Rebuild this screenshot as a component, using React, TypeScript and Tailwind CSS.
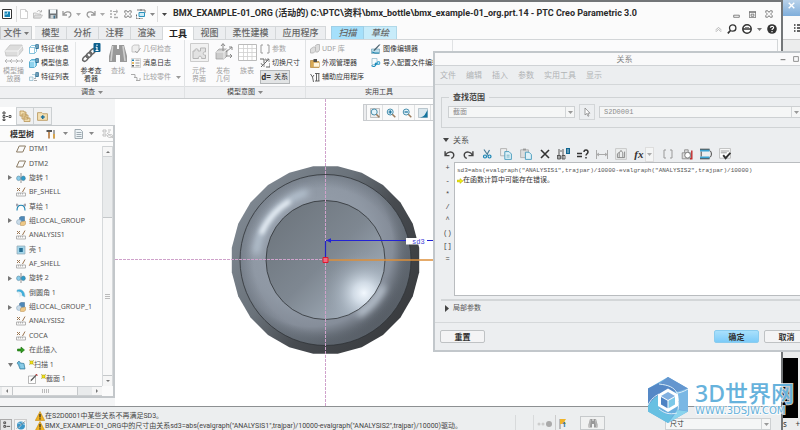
import React from "react";

type P = { children?: React.ReactNode; className?: string; box?: string };

function Ic({ children, className = "size-[10px]", box = "0 0 10 10" }: P) {
  return (
    <svg viewBox={box} className={"block shrink-0 " + className} fill="none" aria-hidden="true">
      {children}
    </svg>
  );
}

function Down({ className = "text-[#888]" }: P) {
  return (
    <Ic className={"h-[3px] w-[5px] " + className} box="0 0 5 3">
      <path d="M0 0h5L2.5 3z" fill="currentColor" />
    </Ic>
  );
}

const icons = {
  newFile: (
    <Ic>
      <path d="M1.5.5h5l2 2v7h-7z" fill="#fff" stroke="#c4c4c4" strokeWidth=".8" />
      <path d="M6.5.5v2h2" stroke="#c4c4c4" strokeWidth=".8" />
    </Ic>
  ),
  open: (
    <Ic>
      <path d="M.5 9V4h3l1 1h3v4z" fill="#eee" stroke="#b5b5b5" strokeWidth=".8" />
      <path d="M2 6h7.500L8 9H.5z" fill="#ddd" stroke="#b5b5b5" strokeWidth=".6" />
      <path d="M4 3c1-2 3-2 4 0M8.500 1v2h-2" stroke="#aaa" strokeWidth=".8" />
    </Ic>
  ),
  save: (
    <Ic>
      <path d="M.5.5h9v9h-9z" fill="#6d7276" />
      <path d="M2 .5h6v4H2z" fill="#f2f6f8" />
      <path d="M2.500 6h5v3.500h-5z" fill="#cdd2d5" />
      <path d="M5.500 6.500h1.500v3H5.500z" fill="#3b6f8c" />
    </Ic>
  ),
  undo: (
    <Ic>
      <path d="M1 2v4h4M1.500 5.500C3 2.500 7 2 8.500 4c1 2 0 4-2 4.500" stroke="currentColor" strokeWidth="1.3" />
    </Ic>
  ),
  redo: (
    <Ic>
      <path d="M9 2v4H5M8.500 5.500C7 2.500 3 2 1.500 4c-1 2 0 4 2 4.500" stroke="currentColor" strokeWidth="1.3" />
    </Ic>
  ),
  regen: (
    <Ic>
      <path d="M1 2h2M1 5h2M1 8h2M5 8.500h4M5 5.500h2" stroke="#aaa" strokeWidth="1.300" />
      <path d="M4 2.500h4M7 .8l2 1.700L7 4.200" stroke="#aaa" />
    </Ic>
  ),
  close: (
    <Ic className="size-[8px]">
      <path d="M1 1h2.500L5 3l1.500-2H9v2L7 5l2 2v2H6.500L5 7 3.500 9H1V7l2-2-2-2z" stroke="#555" strokeWidth=".9" />
    </Ic>
  ),
  windows: (
    <Ic>
      <path d="M1 1h5M4 1h5v3" stroke="#666" strokeWidth=".9" />
      <path d="M3 3.500h5.500v4H3z" fill="#cdeaf6" stroke="#2b93bd" />
      <path d="M.5 5.500v4h6" stroke="#555" strokeWidth=".9" strokeDasharray="2 1" />
    </Ic>
  ),
  cubeInfo: (
    <Ic>
      <path d="M.5 3.500L2.500 1.500h5v6l-2 2h-5z" fill="#fff" stroke="#68b4d4" strokeWidth=".8" />
      <path d="M.5 3.500h5v6M5.500 3.500l2-2" stroke="#68b4d4" strokeWidth=".7" />
      <path d="M6.500.3h3.200v4.500H6.500z" fill="#0c5a86" />
      <path d="M8 1v3" stroke="#fff" strokeWidth=".8" />
    </Ic>
  ),
  modelInfo: (
    <Ic>
      <path d="M.5 3.500L2.500 1.500h5v6l-2 2h-5z" fill="#8fd3ee" stroke="#3f9ec6" strokeWidth=".8" />
      <path d="M.5 3.500h5v6" stroke="#dff4fc" strokeWidth=".7" />
      <path d="M6.500.3h3.200v4.500H6.500z" fill="#0c5a86" />
      <path d="M8 1v3" stroke="#fff" strokeWidth=".8" />
    </Ic>
  ),
  featList: (
    <Ic>
      <path d="M.5 5h3.500v3.500H.5zM3 2.500h3.500V6" fill="#eef6fa" stroke="#8bb6c9" strokeWidth=".7" />
      <path d="M5 8.500h3M5 6.500h2" stroke="#999" strokeWidth=".8" />
      <path d="M6.500.3h3.200v4.500H6.500z" fill="#0c5a86" />
      <path d="M8 1v3" stroke="#fff" strokeWidth=".8" />
    </Ic>
  ),
  geomCheck: (
    <Ic>
      <path d="M1 2.500L3 1h5v5.500L6 8H1z" fill="#eee" stroke="#bbb" strokeWidth=".8" />
      <path d="M4 7l2 2 3.500-5" stroke="#aaa" />
    </Ic>
  ),
  msgLog: (
    <Ic>
      <path d="M.5.5h9v9h-9z" fill="#fafafa" stroke="#bbb" strokeWidth=".6" />
      <path d="M1 1.500h2v1.500H1z" fill="#1d80ae" />
      <path d="M1 4.300h2v1.500H1z" fill="#e0a32c" />
      <path d="M1 7h2v1.500H1z" fill="#555" />
      <path d="M4.500 2.200h4M4.500 5h4M4.500 7.800h4" stroke="#888" strokeWidth=".9" />
    </Ic>
  ),
  compare: (
    <Ic>
      <path d="M0 2.500h4v3M3 5.500h3v3M5 8.500h4V6" stroke="#aaa" />
    </Ic>
  ),
  brackets: (
    <Ic>
      <path d="M3 1H1v8h2M7 1h2v8H7" stroke="#999" />
    </Ic>
  ),
  switchDim: (
    <Ic>
      <path d="M0 1h4v4M6 9h4V5M1 9L9 1" stroke="#555" strokeWidth=".9" />
      <path d="M5 1h1v2h1V1h2v3M1 5l1 2 2-1v3" stroke="#777" strokeWidth=".8" />
    </Ic>
  ),
  udf: (
    <Ic>
      <path d="M.5 5l3-2h2v4l-2 2h-3zM5 2l2-1.500h2.500V6L8 8H5.500" fill="#ddd" stroke="#b3b3b3" strokeWidth=".8" />
    </Ic>
  ),
  palette: (
    <Ic>
      <path d="M.5 2.500h4l1 1h3.500v6H.5z" fill="#d9a954" stroke="#a9782c" strokeWidth=".6" />
      <path d="M3.500 1h3.500v3H3.500z" fill="#4d4d4d" />
      <path d="M3.500 4.500h6v4.500h-6z" fill="#fff4dc" stroke="#c79a50" strokeWidth=".5" />
    </Ic>
  ),
  wrench: (
    <Ic>
      <path d="M.5 2l2 3 1.500-2M2.500 5l1 5M5 1.500h4.500M6.500 1.500V9M8.800 1.500V9M5 9h4.500" stroke="#555" strokeWidth=".9" />
    </Ic>
  ),
  imgEdit: (
    <Ic>
      <path d="M.5 5h8v4.500h-8z" fill="#b9dcea" stroke="#6699ac" strokeWidth=".6" />
      <path d="M9.500.5L4 6.500l-1.500.7.5-1.700L8 .5z" fill="#4b6370" />
      <path d="M1 8l3 1h4" stroke="#1982ad" />
    </Ic>
  ),
  importCfg: (
    <Ic>
      <path d="M1 .5h5v6H1z" fill="#f6fbfd" stroke="#7aa9bd" strokeWidth=".6" />
      <path d="M.5 7.500C3 9.500 5 8 5 5.500M3.700 6.700L5 5l1.500 1.500" stroke="#1689b9" strokeWidth="1.100" />
      <circle cx="7.500" cy="5" r="1.900" fill="#45a8d0" />
      <circle cx="7.500" cy="5" r=".7" fill="#fff" />
    </Ic>
  ),
  plane: (
    <Ic>
      <path d="M3.200 2H9.500L6.800 8H.5z" stroke="#8a7a62" />
    </Ic>
  ),
  revolve: (
    <Ic>
      <path d="M5 0v10" stroke="#777" strokeWidth=".8" />
      <ellipse cx="2.600" cy="5.300" rx="2" ry="2.300" fill="#8acbe8" stroke="#5a8ca3" strokeWidth=".6" />
      <ellipse cx="7.300" cy="5.300" rx="2" ry="2.300" fill="#2b9bcb" stroke="#4a7c93" strokeWidth=".6" />
    </Ic>
  ),
  analysis: (
    <Ic>
      <path d="M1 1l3 3M4 1L1 4" stroke="#9a7550" />
      <path d="M9 .5L6.500 5" stroke="#9a7550" />
      <path d="M.5 6h9v3h-9zM2.500 6v1.500M4.500 6v1.500M6.500 6v1.500" stroke="#a2a2a2" strokeWidth=".8" />
    </Ic>
  ),
  sketch: (
    <Ic>
      <path d="M1 8.500C1 1.500 9 1.500 9 8.500" stroke="#1a83b1" strokeWidth="1.100" />
      <path d="M0 3h2.500M7.500 3H10M1 1.500v3M9 1.500v3" stroke="#667" strokeWidth=".7" />
    </Ic>
  ),
  group: (
    <Ic>
      <path d="M3.500 1.500L5 .5h3.500V5l-1.500 1H3.500z" fill="#4d88b8" stroke="#39688f" strokeWidth=".5" />
      <circle cx="3" cy="6" r="2.500" fill="#c9dbe8" stroke="#86a3b8" strokeWidth=".5" />
      <path d="M4.500 9.500V6.500l2-1.200h3v3L8 9.500z" fill="#eec887" stroke="#ba9150" strokeWidth=".5" />
    </Ic>
  ),
  shell: (
    <Ic>
      <path d="M1 1h8v8H1z" fill="#a5d6ea" stroke="#92a7b1" strokeWidth=".7" />
      <path d="M3.200 3h3.600v4H3.200z" fill="#276f93" />
    </Ic>
  ),
  round: (
    <Ic>
      <path d="M1 2c4-2 8 1 8 7L6 7.500C6 5 4.500 3 1 4z" fill="#3daedb" stroke="#86b7ca" strokeWidth=".5" />
      <path d="M1 4c3.500-1 5 1 5 3.500L3 9.500C4 7 3 5 1 4z" fill="#dcebf2" />
    </Ic>
  ),
  insert: (
    <Ic>
      <path d="M1.500 4h3.500V2L8.500 5 5 8V6H1.500z" fill="#2f9b1f" stroke="#176b0c" strokeWidth=".6" />
    </Ic>
  ),
  sweep: (
    <Ic>
      <path d="M1 3l2-2 1.500 2L8 3.500 9 9H4L2.500 5z" fill="#67b9dc" stroke="#3d7c99" strokeWidth=".7" />
      <path d="M4 5h3.500M4.500 7H8" stroke="#c9ecf9" strokeWidth=".7" />
    </Ic>
  ),
  section: (
    <Ic>
      <path d="M.5 2h7v7.500h-7z" fill="#fff" stroke="#999" strokeWidth=".7" />
      <path d="M9.500.5L4 6.500l-1.500 1 .5-2L8.500 0z" fill="#555" />
      <path d="M7.500 0l2 1.500" stroke="#d33" />
    </Ic>
  ),
  spark: (
    <Ic className="mb-[4px] size-[5px]">
      <path d="M2 2h6v6H2z" fill="#f6e51b" stroke="#a09500" />
      <path d="M0 0l2 2M10 0L8 2M0 10l2-2M10 10L8 8" stroke="#a09500" />
    </Ic>
  ),
  warn: (
    <Ic className="size-[10px]">
      <path d="M5 .5L9.700 9.500H.3z" fill="#f0b323" stroke="#c68a10" strokeWidth=".6" />
      <path d="M5 3v3.500M5 7.300v1.200" stroke="#222" strokeWidth="1.200" />
    </Ic>
  ),
  binoc: (
    <>
      <path d="M2 1h2.500v2h1V1H8l1.500 5.500v3H6V6H4v3.500H.5v-3z" fill="#999" />
      <path d="M2.300 1.500L1.500 9M7.500 1.500l1 7.500" stroke="#cfcfcf" strokeWidth=".8" />
    </>
  ),
};

function BigTool({ label, icon, dim = true, wide = "w-[24px]" }: { label: string[]; icon: React.ReactNode; dim?: boolean; wide?: string }) {
  return (
    <button className={"flex h-[43px] flex-col items-center leading-[8px] " + wide + (dim ? " text-[#a2a2a2]" : " text-[#333]")}>
      <span className="mb-[4px] flex h-[21px] items-center">{icon}</span>
      {label.map((l) => (
        <span key={l} className="whitespace-nowrap">{l}</span>
      ))}
    </button>
  );
}

function Tool({ label, icon, dim, menu, on }: { label: string; icon: React.ReactNode; dim?: boolean; menu?: boolean; on?: boolean }) {
  return (
    <button
      className={
        "flex h-[14px] items-center gap-[2px] whitespace-nowrap pr-[2px] " +
        (dim ? "text-[#a2a2a2] " : "text-[#333] ") +
        (on ? "bg-[#e2e4e5] outline outline-[#b3b6b8] -outline-offset-1" : "")
      }
    >
      {icon}
      {label}
      {menu && <span className="pl-[3px]"><Down className="text-[#999]" /></span>}
    </button>
  );
}

const tabs = [
  ["模型", "w-[32px]"], ["分析", "w-[32px]"], ["注释", "w-[32px]"], ["渲染", "w-[32px]"], ["工具", "w-[31px]"],
  ["视图", "w-[32px]"], ["柔性建模", "w-[50px]"], ["应用程序", "w-[50px]"],
];

function TitleBar() {
  return (
    <header className="flex h-[24px] items-center pl-[2px] pr-[8px]">
      <Ic className="size-[10px]">
        <path d="M.5.5h9v9h-9z" fill="#fff" stroke="#333" />
        <path d="M2.500 2.500H8V8H2.500z" fill="#1683b4" />
        <path d="M2.500 5h3V2.500" stroke="#a6d9ee" />
      </Ic>
      <span className="ml-[4px] h-[16px] w-px bg-[#ddd]" />
      <div className="ml-[2px] flex w-[136px] items-center justify-between text-[#999]">
        <button aria-label="新建">{icons.newFile}</button>
        <button aria-label="打开">{icons.open}</button>
        <button aria-label="保存">{icons.save}</button>
        <button aria-label="撤消" className="flex items-center gap-[4px]">{icons.undo}<Down className="text-[#aaa]" /></button>
        <button aria-label="重做" className="flex items-center gap-[4px]">{icons.redo}<Down className="text-[#aaa]" /></button>
        <button aria-label="重新生成">{icons.regen}</button>
        <button aria-label="关闭">{icons.close}</button>
        <button aria-label="窗口" className="flex items-center gap-[4px]">{icons.windows}<Down /></button>
      </div>
      <span className="ml-[2px] h-[16px] w-px bg-[#ddd]" />
      <button aria-label="自定义" className="ml-[4px]"><Down className="text-[#444]" /></button>
      <h1 className="ml-[6px] grow whitespace-nowrap font-['Roboto','Noto_Sans_CJK_SC',sans-serif] text-[9px] font-bold text-[#2b2b2b]">
        BMX_EXAMPLE-01_ORG (活动的) C:\PTC\资料\bmx_bottle\bmx_example-01_org.prt.14 - PTC Creo Parametric 3.0
      </h1>
      <div className="flex gap-[9px]">
        <button aria-label="最小化"><Ic className="size-[7px]"><path d="M1 6h8v3H1z" stroke="#555" /></Ic></button>
        <button aria-label="最大化"><Ic className="size-[7px]"><path d="M.5.5h9v9h-9zM.5 2h9M3 4.500h4v3H3z" stroke="#555" /></Ic></button>
        <button aria-label="关闭窗口">{icons.close}</button>
      </div>
    </header>
  );
}

function TabBar() {
  return (
    <nav className="flex h-[13px] items-stretch text-[9px] font-medium leading-[12px] text-[#666]">
      <button className="flex w-[32px] items-center justify-center gap-[2px] border border-b-0 border-[#c9ccce] bg-[#e6e8ea]">
        文件<Down className="text-[#777]" />
      </button>
      <div className="ml-[3px] flex">
        {tabs.map(([t, w]) => (
          <button
            key={t}
            className={
              w + " whitespace-nowrap border-r border-t border-[#d4d7d9] " +
              (t === "工具" ? "relative -mb-px bg-white font-bold text-[#222]" : "bg-[#eceef0]")
            }
          >
            {t}
          </button>
        ))}
      </div>
      <button className="ml-[5px] w-[33px] border border-b-0 border-[#9fcfe6] bg-[#a5e0fb] italic">扫描</button>
      <button className="w-[33px] border border-b-0 border-l-0 border-[#b0d8e8] bg-[#c8ecfa] italic">草绘</button>
      <div className="ml-auto flex items-center gap-[5px] pb-[7px] pr-[4px]">
        <Ic className="h-[5px] w-[7px]" box="0 0 7 5"><path d="M.5 3l3-2.500 3 2.500M.5 5l3-2.500 3 2.500" stroke="#aaa" strokeWidth=".8" /></Ic>
        <Ic><circle cx="5.700" cy="4" r="3.200" stroke="#333" strokeWidth="1.300" /><path d="M3.500 6.500L.8 9.300" stroke="#333" strokeWidth="1.700" /></Ic>
        <Ic><circle cx="5" cy="5" r="4.200" fill="#fff" stroke="#333" strokeWidth="1.500" /><path d="M1 5h8" stroke="#333" strokeWidth="1.500" /><path d="M3 3.500h4" stroke="#888" /></Ic>
        <Down className="text-[#777]" />
        <Ic><circle cx="5" cy="5" r="4.800" fill="#333" /><path d="M3.400 3.700C3.400 1.800 6.700 1.800 6.600 3.700 6.600 4.800 5 4.800 5 6M5 7v1.300" stroke="#fff" strokeWidth="1.200" /></Ic>
      </div>
    </nav>
  );
}

function Ribbon() {
  return (
    <section className="mr-[3px] border-b border-[#c8cbcd] text-[7px]">
      <div className="flex h-[59px] border-r border-t border-[#d3d6d8] bg-[#fbfbfc]">
        <div className="flex w-[185px] flex-col border-r border-[#e0e2e4]">
          <div className="flex h-[46px] pt-[2px]">
            <BigTool
              wide="w-[27px]"
              label={["模型播", "放器"]}
              icon={
                <Ic className="size-[20px]" box="0 0 20 20">
                  <path d="M1 8l5-6h12l1 5-5 6H2z" fill="#dcdcdc" stroke="#bdbdbd" strokeWidth=".7" />
                  <path d="M1 8h13l4.500-5M14 8v5" stroke="#f5f5f5" />
                  <path d="M1 18h18M3 16l-2 2 2 2M8 16l-2 2 2 2M12 16l2 2-2 2M17 16l2 2-2 2" stroke="#aaa" strokeWidth=".8" />
                </Ic>
              }
            />
            <div className="flex w-[49px] flex-col border-r border-[#e4e6e7] pl-[2px]">
              <Tool label="特征信息" icon={icons.cubeInfo} />
              <Tool label="模型信息" icon={icons.modelInfo} />
              <Tool label="特征列表" icon={icons.featList} />
            </div>
            <BigTool
              wide="w-[30px]"
              dim={false}
              label={["参考查", "看器"]}
              icon={
                <Ic className="size-[20px]" box="0 0 20 20">
                  <g stroke="#666" strokeWidth="1.500">
                    <ellipse cx="4.500" cy="15.500" rx="3.300" ry="2" transform="rotate(-45 4.500 15.500)" />
                    <ellipse cx="8" cy="12" rx="3.300" ry="2" transform="rotate(-45 8 12)" />
                    <ellipse cx="11.500" cy="8.500" rx="3.300" ry="2" transform="rotate(-45 11.500 8.500)" />
                  </g>
                  <rect x="12.500" y="0" width="7" height="9" rx="1" fill="#0c5f8d" />
                  <path d="M16 1.500v1.500M16 4v3.500M14.700 4.300H16M14.500 7.500h3" stroke="#fff" strokeWidth="1.100" />
                </Ic>
              }
            />
            <BigTool wide="w-[24px]" label={["查找"]} icon={<Ic className="size-[20px]">{icons.binoc}</Ic>} />
            <div className="flex flex-col pl-[1px]">
              <Tool dim label="几何检查" icon={icons.geomCheck} />
              <Tool label="消息日志" icon={icons.msgLog} />
              <Tool dim menu label="比较零件" icon={icons.compare} />
            </div>
          </div>
          <div className="flex h-[12px] items-center justify-center gap-[3px] border-t border-[#dcdee0] bg-[#eff0f2] text-[#444]">调查<Down /></div>
        </div>
        <div className="flex w-[121px] flex-col border-r border-[#e0e2e4]">
          <div className="flex h-[46px] pl-[2px] pt-[2px]">
            <BigTool
              label={["元件", "界面"]}
              icon={
                <Ic className="size-[19px]" box="0 0 19 19">
                  <path d="M.5.500h18v18H.5z" fill="#f1f1f1" stroke="#ccc" />
                  <path d="M3 15.500V8h2c-1-3 4-3 3 0h2.500v-3h5v4c-3-1-3 4 0 3v3.500h-4c1-3-4-3-3 0z" fill="#e2e2e2" stroke="#b5b5b5" />
                </Ic>
              }
            />
            <BigTool
              label={["发布", "几何"]}
              icon={
                <Ic className="size-[19px]" box="0 0 19 19">
                  <path d="M2 9l3-3h8v7l-3 3H2z" fill="#ccc" stroke="#999" strokeWidth=".7" />
                  <path d="M2 9h8v7M10 9l3-3" stroke="#eee" />
                  <path d="M9 8V1M7 3l2-2.500L11 3M12 9l6-5M15 4h3v3M12 13h6M16 11l2 2-2 2" stroke="#888" />
                </Ic>
              }
            />
            <BigTool
              label={["族表"]}
              icon={
                <Ic className="size-[19px]" box="0 0 19 19">
                  <path d="M.5 1.500h18v16H.5z" fill="#fff" stroke="#bbb" />
                  <path d="M1 5.500h17M1 9.500h17M1 13.500h17M5.500 2v15M9.500 2v15M14 2v15" stroke="#cfcfcf" strokeWidth=".8" />
                </Ic>
              }
            />
            <div className="flex flex-col items-start pl-[1px]">
              <Tool dim label="参数" icon={icons.brackets} />
              <Tool label="切换尺寸" icon={icons.switchDim} />
              <Tool on label="关系" icon={<b className="w-[12px] text-center text-[8px] leading-[12px]">d=</b>} />
            </div>
          </div>
          <div className="flex h-[12px] items-center justify-center gap-[3px] border-t border-[#dcdee0] bg-[#eff0f2] text-[#444]">模型意图<Down /></div>
        </div>
        <div className="flex w-[147px] flex-col border-r border-[#e0e2e4]">
          <div className="flex h-[46px] gap-[10px] pl-[4px] pt-[2px]">
            <div className="flex w-[51px] flex-col">
              <Tool dim label="UDF 库" icon={icons.udf} />
              <Tool label="外观管理器" icon={icons.palette} />
              <Tool label="辅助应用程序" icon={icons.wrench} />
            </div>
            <div className="flex flex-col">
              <Tool label="图像编辑器" icon={icons.imgEdit} />
              <Tool label="导入配置文件编辑器" icon={icons.importCfg} />
            </div>
          </div>
          <div className="flex h-[12px] items-center justify-center border-t border-[#dcdee0] bg-[#eff0f2] text-[#444]">实用工具</div>
        </div>
        <div className="mt-[46px] grow border-t border-[#dcdee0] bg-[#eff0f2]" />
      </div>
    </section>
  );
}

type Row = { n: string; i: React.ReactNode; a?: "r" | "d"; s?: boolean; sub?: boolean };
const rows: Row[] = [
  { n: "DTM1", i: icons.plane }, { n: "DTM2", i: icons.plane }, { n: "旋转 1", i: icons.revolve, a: "r" },
  { n: "BF_SHELL", i: icons.analysis }, { n: "草绘 1", i: icons.sketch }, { n: "组LOCAL_GROUP", i: icons.group, a: "r" },
  { n: "ANALYSIS1", i: icons.analysis }, { n: "壳 1", i: icons.shell }, { n: "AF_SHELL", i: icons.analysis },
  { n: "旋转 2", i: icons.revolve, a: "r" }, { n: "倒圆角 1", i: icons.round }, { n: "组LOCAL_GROUP_1", i: icons.group, a: "r" },
  { n: "ANALYSIS2", i: icons.analysis }, { n: "COCA", i: icons.analysis }, { n: "在此插入", i: icons.insert },
  { n: "扫描 1", i: icons.sweep, a: "d", s: true }, { n: "截面 1", i: icons.section, s: true, sub: true },
];

function ModelTree() {
  return (
    <aside className="flex w-[115px] shrink-0 flex-col bg-[#f4f5f6] pb-[8px] pt-[8px]">
      <div className="flex h-[18px] shrink-0">
        <button aria-label="模型树" className="flex w-[16px] items-center bg-white pl-[2px]">
          <Ic><path d="M1 1h2v2H1zM1 4.500h2v2H1zM1 8h2v1.500H1zM7 4.500h2v2H7zM4 5.500h2" stroke="#444" strokeWidth=".9" /></Ic>
        </button>
        <button aria-label="文件夹浏览器" className="flex w-[18px] items-center justify-center border border-[#ccd0d2] bg-[#f0f1f2]">
          <Ic className="size-[12px]" box="0 0 12 12"><path d="M1 1h4v1h2v4H1zM3 4h4v1h2v4H3zM5 7h3v1h3v3.500H5z" fill="#f0dcae" stroke="#b99657" strokeWidth=".8" /></Ic>
        </button>
        <button aria-label="收藏夹" className="flex w-[18px] items-center justify-center border border-l-0 border-[#ccd0d2] bg-[#f0f1f2]">
          <Ic className="size-[11px]"><path d="M.5 1.500h4l1 1h4v6h-9z" fill="#f3e0b4" stroke="#bb9b62" strokeWidth=".8" /><path d="M3.500 5.500h3.500M5.200 3.800v3.500" stroke="#1c6f9b" strokeWidth="1.400" /></Ic>
        </button>
      </div>
      <div className="flex min-h-0 grow flex-col border-b-2 border-r-2 border-t border-[#c3c7ca] bg-[#fbfbfb] text-[7px]">
        <div className="flex h-[16px] shrink-0 items-center border-b border-[#cfd2d4] pl-[10px]">
          <h2 className="whitespace-nowrap text-[8px] font-bold leading-[12px] text-[#333]">模型树</h2>
          <button aria-label="设置" className="ml-[12px] flex items-center gap-[7px]">
            <Ic><path d="M.5 1h5.500v2H.5z" fill="#555" /><path d="M3 3v6.500" stroke="#b5773a" strokeWidth="1.600" /><path d="M8 1v8.500" stroke="#777" strokeWidth="1.300" /><path d="M8 5v4.500" stroke="#e0a43b" strokeWidth="1.600" /></Ic>
            <Down />
          </button>
          <button aria-label="显示" className="ml-[6px] flex items-center gap-[5px]">
            <Ic><path d="M1 .5h5.500l2 2v7H1z" fill="#eef4f7" stroke="#8b98a0" strokeWidth=".8" /><path d="M2.500 3.500h5M2.500 5.500h5M2.500 7.500h5" stroke="#8b98a0" strokeWidth=".8" /></Ic>
            <Down />
          </button>
          <Ic className="ml-[8px] h-[10px] w-[12px]" box="0 0 12 10"><path d="M1 1h3v2H1zM1 5h3v2H1zM6 1h3M6 3h2M5 7c2-2 5-2 6 0-2 2-4 2-6 0zM5 4l6 5" stroke="#bbb" strokeWidth=".9" /></Ic>
        </div>
        <div className="flex min-h-0 grow">
          <ul className="flex min-w-0 grow flex-col">
            {rows.map((r) => (
              <li key={r.n} className={"flex min-h-0 flex-1 items-center whitespace-nowrap leading-[10px] text-[#555] " + (r.sub ? "pl-[20px]" : "pl-[8px]")}>
                <span className="w-[8px] shrink-0">
                  {r.a === "r" && <Ic className="h-[5px] w-[4px]" box="0 0 4 5"><path d="M0 0l4 2.500L0 5z" fill="#777" /></Ic>}
                  {r.a === "d" && <Ic className="h-[4px] w-[5px]" box="0 0 5 4"><path d="M0 0h5L2.500 4z" fill="#777" /></Ic>}
                </span>
                {r.i}
                <span className="flex items-center pl-[3px]">
                  {r.s && icons.spark}
                  {r.n}
                </span>
              </li>
            ))}
          </ul>
          <div className="mt-[4px] flex w-[11px] shrink-0 flex-col border-x border-[#d6d9db] bg-[#e9ebec]">
            <button aria-label="向上" className="flex h-[11px] items-center justify-center border-y border-[#d0d3d5] bg-[#f6f6f6]"><Ic className="h-[2px] w-[4px]" box="0 0 4 2"><path d="M0 2h4L2 0z" fill="#777" /></Ic></button>
            <div className="h-[60px]" />
            <div className="flex grow flex-col items-center justify-center gap-px border-y border-[#c5c8ca] bg-[#f8f8f8]">
              <span className="h-px w-[5px] bg-[#bbb]" /><span className="h-px w-[5px] bg-[#bbb]" /><span className="h-px w-[5px] bg-[#bbb]" />
            </div>
            <button aria-label="向下" className="flex h-[10px] items-center justify-center bg-[#f6f6f6]"><Ic className="h-[2px] w-[4px]" box="0 0 4 2"><path d="M0 0h4L2 2z" fill="#777" /></Ic></button>
          </div>
        </div>
        <div className="mr-[11px] flex h-[10px] shrink-0 border-y border-[#cdd0d2] bg-[#e9ebec] pl-[2px]">
          <button aria-label="向左" className="flex w-[10px] items-center justify-center bg-[#f6f6f6]"><Ic className="h-[4px] w-[2px]" box="0 0 2 4"><path d="M2 0v4L0 2z" fill="#777" /></Ic></button>
          <div className="flex w-[66px] items-center justify-center gap-px border-x border-[#c5c8ca] bg-[#f8f8f8]">
            <span className="h-[4px] w-px bg-[#bbb]" /><span className="h-[4px] w-px bg-[#bbb]" /><span className="h-[4px] w-px bg-[#bbb]" /><span className="h-[4px] w-px bg-[#bbb]" />
          </div>
          <button aria-label="向右" className="ml-auto flex w-[10px] items-center justify-center bg-[#f6f6f6]"><Ic className="h-[4px] w-[2px]" box="0 0 2 4"><path d="M0 0v4L2 2z" fill="#777" /></Ic></button>
        </div>
      </div>
    </aside>
  );
}

const rim = Array.from({ length: 24 }, (_, k) => {
  const a = ((k + 0.5) * Math.PI) / 12;
  return `${(325.5 + 94.5 * Math.cos(a)).toFixed(1)},${(260 + 94.5 * Math.sin(a)).toFixed(1)}`;
}).join(" ");

function Canvas() {
  return (
    <main className="relative min-w-0 grow overflow-hidden bg-white">
      <svg width="666" height="307" viewBox="115 99 666 307" className="block" role="img" aria-label="瓶底模型">
        <defs>
          <linearGradient id="rim" x1="0" y1="0.1" x2="1" y2="0.8">
            <stop offset="0" stopColor="#858e98" /><stop offset=".4" stopColor="#6a727a" /><stop offset=".62" stopColor="#474b50" /><stop offset="1" stopColor="#37393c" />
          </linearGradient>
          <radialGradient id="ring" gradientUnits="userSpaceOnUse" cx="312" cy="246" r="106">
            <stop offset="0" stopColor="#9aa3af" /><stop offset=".6" stopColor="#8f98a4" /><stop offset=".76" stopColor="#858d99" /><stop offset=".88" stopColor="#5f666f" /><stop offset="1" stopColor="#3c4046" />
          </radialGradient>
          <radialGradient id="edge" gradientUnits="userSpaceOnUse" cx="325.500" cy="260" r="85.500">
            <stop offset=".84" stopColor="#6b747e" stopOpacity="0" /><stop offset="1" stopColor="#6b747e" stopOpacity=".6" />
          </radialGradient>
          <linearGradient id="disk" x1="0.1" y1="0.1" x2="0.9" y2="0.9">
            <stop offset="0" stopColor="#6e767e" /><stop offset=".5" stopColor="#7e8791" /><stop offset="1" stopColor="#a7b3c0" />
          </linearGradient>
          <radialGradient id="glow" gradientUnits="userSpaceOnUse" cx="364" cy="293" r="42">
            <stop offset="0" stopColor="#f2f8fe" /><stop offset=".25" stopColor="#dbe5ef" stopOpacity=".85" /><stop offset=".6" stopColor="#b3bfcb" stopOpacity=".4" /><stop offset="1" stopColor="#8f99a5" stopOpacity="0" />
          </radialGradient>
          <filter id="soft" x="-50%" y="-50%" width="200%" height="200%"><feGaussianBlur stdDeviation="3.500" /></filter>
          <filter id="soft2" x="-50%" y="-50%" width="200%" height="200%"><feGaussianBlur stdDeviation="2.200" /></filter>
          <clipPath id="inner"><circle cx="325.500" cy="260" r="59.500" /></clipPath>
          <clipPath id="outer"><circle cx="325.500" cy="260" r="85.500" /></clipPath>
        </defs>
        <polygon points={rim} fill="url(#rim)" />
        <circle cx="325.500" cy="260" r="85.500" fill="url(#ring)" />
        <circle cx="325.500" cy="260" r="85.500" fill="url(#edge)" />
        <g clipPath="url(#outer)">
          <path d="M256 254A70 70 0 0 1 308 192" stroke="#bccad8" strokeWidth="6" fill="none" filter="url(#soft)" />
          <path d="M261 234A69.500 69.500 0 0 1 290 201" stroke="#f0f7fd" strokeWidth="4" fill="none" filter="url(#soft2)" />
          <path d="M358 315A64 64 0 0 0 384 286" stroke="#d0dbe6" strokeWidth="5" fill="none" filter="url(#soft)" />
        </g>
        <circle cx="325.500" cy="260" r="85.500" fill="none" stroke="#2e3236" strokeWidth=".8" />
        <g clipPath="url(#inner)">
          <rect x="266" y="200" width="119" height="120" fill="url(#disk)" />
          <circle cx="364" cy="293" r="42" fill="url(#glow)" />
        </g>
        <circle cx="325.500" cy="260" r="59.500" fill="none" stroke="#2e3236" strokeWidth=".8" />
        <path d="M115 259.500H325M325.500 99V406" stroke="#cfa2cb" strokeWidth="1" strokeDasharray="3 1" />
        <path d="M326 260H440" stroke="#dd8f3a" strokeWidth="1.400" />
        <path d="M325.500 241V258" stroke="#2323c4" strokeWidth="1.200" />
        <path d="M326 240.500H440" stroke="#2323d4" strokeWidth="1" />
        <path d="M326 240.500l5-2.200v4.400z" fill="#2323d4" />
        <rect x="406" y="238" width="21" height="6.500" fill="#fff" />
        <path d="M323 257.500h5v5h-5z" fill="#f06a80" stroke="#e0182e" />
        <text x="412" y="244" fontSize="7" fill="#3b3bd8" fontFamily="Liberation Mono, monospace">sd3</text>
      </svg>
      <div className="absolute left-[248px] top-[5px] flex h-[17px] items-stretch border border-[#c9cccf] bg-[#fafafa]">
        <span className="w-[3px] border-r border-[#c9cccf] bg-[#ebecee]" />
        {["重新调整", "放大", "缩小", "重画", "着色"].map((n, k) => (
          <button key={n} aria-label={n} className="flex w-[16px] items-center justify-center border-r border-[#dfe1e2]">
            {k === 3 || k === 4 ? (
              <Ic><path d="M.5.500h9v9h-9z" fill="#dbe8ee" stroke="#97aab3" strokeWidth=".6" /><path d="M9.500 2v7.500H2C7 8.500 7 6 9.500 2z" fill="#14749e" /></Ic>
            ) : (
              <Ic>
                {k === 0 && <path d="M.5.5h9v9h-9z" fill="#eee" stroke="#aaa" strokeWidth=".7" />}
                <circle cx="4.200" cy="4" r="3" fill="#e3f3fa" stroke="#4a90ae" />
                <path d="M6.300 6.300L9.300 9.300" stroke="#9a7a5a" strokeWidth="1.500" />
                {k > 0 && <path d={k === 1 ? "M2.500 4h3.400M4.200 2.300v3.400" : "M2.500 4h3.400"} stroke="#0f6c97" strokeWidth="1.200" />}
              </Ic>
            )}
          </button>
        ))}
      </div>
    </main>
  );
}

function Picker({ value, label, className }: { value: string; label: string; className: string }) {
  return (
    <label className={"relative flex h-[12px] items-stretch border border-[#cdd0d2] bg-[#f5f6f6] " + className}>
      <select aria-label={label} className="w-full appearance-none pl-[4px] pr-[10px] leading-[10px]"><option>{value}</option></select>
      <span className="pointer-events-none absolute inset-y-0 right-0 flex w-[9px] items-center justify-center border-l border-[#d3d6d8]"><Down className="text-[#999]" /></span>
    </label>
  );
}

function StatusBar() {
  return (
    <footer className="flex h-[24px] shrink-0 items-start border-t border-[#8d9092] bg-[#eceeef] text-[7px] text-[#444]">
      <div className="flex shrink-0 gap-[2px] pt-[12px]">
        <button aria-label="树" className="flex h-[12px] w-[12px] items-center justify-center border border-[#aaa] bg-[#e4e6e7]">
          <Ic className="size-[9px]"><path d="M2 1h2v2H2zM2 5h2v2H2zM5 6h4" stroke="#444" /></Ic>
        </button>
        <button aria-label="浏览器" className="flex h-[12px] w-[13px] items-center justify-center border border-[#ccc] bg-[#f5f5f5]">
          <Ic><circle cx="5" cy="5.500" r="4" fill="#3a96c8" /><path d="M2 3c2 0 3 1 3 2s-2 2-2 3M6 2c0 2 2 2 3 3" stroke="#b9def0" /><path d="M.5 8.500L9.500 1" stroke="#888" strokeWidth=".7" /></Ic>
        </button>
      </div>
      <div className="flex grow flex-col pl-[8px] pt-[4px] font-['Roboto','Noto_Sans_CJK_SC',sans-serif] leading-[10px]">
        <p className="flex items-center whitespace-nowrap">{icons.warn}在S2D0001中某些关系不再满足SD3。</p>
        <p className="flex items-center whitespace-nowrap">{icons.warn}BMX_EXAMPLE-01_ORG中的尺寸由关系sd3=abs(evalgraph("ANALYSIS1",trajpar)/10000-evalgraph("ANALYSIS2",trajpar)/10000)驱动。</p>
      </div>
      <div className="flex h-[15px] shrink-0 items-end self-end">
        <span className="h-[15px] w-px bg-[#d8dadb]" />
        <span className="ml-[17px] h-[15px] w-px bg-[#d8dadb]" />
        <Ic className="ml-[2px] h-[14px] w-[17px]" box="0 0 17 14"><circle cx="3" cy="8" r="1.500" fill="#ccc" /><circle cx="7" cy="8" r="1.500" fill="#ccc" /><circle cx="13" cy="8" r="3" fill="#aaa" /></Ic>
        <span className="ml-[2px] h-[15px] w-px bg-[#ccc]" />
        <span className="flex w-[24px] items-end pl-[3px]"><Ic className="h-[12px] w-[8px]" box="0 0 8 12"><path d="M1 1v10" stroke="#888" /><path d="M1 1h6L5.500 3.500 7 6H1z" fill="#f0b429" /></Ic><b className="-ml-[5px] text-[#37a]">1</b></span>
        <button aria-label="查找" className="flex h-[14px] w-[25px] items-center justify-center border border-[#c6c9cb] bg-[#f0f1f1]"><Ic>{icons.binoc}</Ic></button>
        <Picker value="尺寸" label="选择过滤器" className="ml-[60px] mr-[10px] w-[106px] text-[#333]" />
      </div>
    </footer>
  );
}

const editTools: [string, React.ReactElement][] = [
  ["撤消", <Ic className="size-[11px] text-[#444]"><path d="M1 2v4h4M1.500 5.500C3 2.500 7 2 8.500 4c1 2 0 4-2 4.500" stroke="currentColor" strokeWidth="1.300" /></Ic>],
  ["重做", <Ic className="size-[11px] text-[#444]"><path d="M9 2v4H5M8.500 5.500C7 2.500 3 2 1.500 4c-1 2 0 4 2 4.500" stroke="currentColor" strokeWidth="1.300" /></Ic>],
  ["剪切", <Ic><path d="M2 .5l4 6M7.500 1L5 5.500" stroke="#4c7f98" strokeWidth="1.200" /><circle cx="3" cy="7.500" r="1.500" stroke="#1683b4" strokeWidth="1.200" /><circle cx="7.500" cy="7.500" r="1.500" stroke="#1683b4" strokeWidth="1.200" /></Ic>],
  ["复制", <Ic className="size-[12px]"><path d="M.5.500h5v6h-5z" fill="#eee" stroke="#aaa" strokeWidth=".7" /><path d="M4 3h3.500l2 2v4.500H4z" fill="#dff1f8" stroke="#4d9fbe" strokeWidth=".8" /><path d="M5.500 6h2.500M5.500 7.500h2.500" stroke="#6ab" strokeWidth=".7" /></Ic>],
  ["粘贴", <Ic className="size-[12px]"><path d="M.5 1.500h6.500v6.500H.5z" fill="#ddd" stroke="#aaa" strokeWidth=".7" /><path d="M2.500.5h2.500v1.500H2.500z" fill="#999" /><path d="M4.500 3.500h3l2 2v4h-5z" fill="#dff1f8" stroke="#4d9fbe" strokeWidth=".8" /></Ic>],
  ["删除", <Ic><path d="M1 1l8 8M9 1L1 9" stroke="#333" strokeWidth="1.600" /></Ic>],
  ["查找替换", <Ic className="h-[12px] w-[13px]" box="0 0 13 12"><path d="M2 1v10M6 1v10M0 7.500h3M5 7.500h3" stroke="#555" /><path d="M.5 7.500v3.500h3V7.500zM5 7.500v3.500h3V7.500zM3 3h2" stroke="#555" strokeWidth=".9" /><path d="M9 0h4v6H9z" fill="#0f6590" /><path d="M10 2h2M10 4h2" stroke="#fff" strokeWidth=".7" /></Ic>],
  ["验证值", <Ic className="h-[10px] w-[12px]" box="0 0 12 10"><path d="M0 4.500h5M0 7.500h5" stroke="#333" strokeWidth="1.300" /><path d="M7 3c0-3 4-2.500 4 0 0 1.700-2 1.700-2 3.500M9 8v1.500" stroke="#333" strokeWidth="1.500" /></Ic>],
  ["尺寸", <Ic className="h-[9px] w-[12px]" box="0 0 12 9"><path d="M.5 0v9M11.500 0v9M1 4.500h10M3 3L1 4.500 3 6M9 3l2 1.500L9 6" stroke="#aaa" /></Ic>],
  ["单位", <Ic className="size-[12px]"><path d="M.5.500h9v9h-9z" fill="#eceeee" stroke="#bbb" strokeWidth=".6" /><path d="M2 8V5l1.500-1.500M3.500 8V4L5 2l1.500 2v4M2 8h6V3" stroke="#888" strokeWidth=".8" /></Ic>],
  ["函数", <span className="flex items-center gap-[2px] text-[#333]"><i className="font-['Liberation_Serif',serif] text-[11px] font-bold leading-[12px]">fx</i><span className="flex h-[15px] w-[9px] items-center justify-center border border-[#ddd] bg-[#f4f5f5]"><Down className="text-[#aaa]" /></span></span>],
  ["参数", icons.brackets],
  ["时间", <Ic className="size-[12px]"><path d="M1 4h7v5H1zM3 4V1.500h3V4" fill="#ddd" stroke="#888" strokeWidth=".7" /><circle cx="5.500" cy="6" r="2.400" fill="#fff" stroke="#777" strokeWidth=".8" /><path d="M9 2v7.500M7.500 9h2" stroke="#c22f2f" strokeWidth="1.200" /></Ic>],
  ["排序", <Ic className="size-[12px]"><path d="M0 1h8v2H0zM0 7h8v2H0z" fill="#3ba3d2" /><path d="M0 1h8M0 9h8M1 3v4M8 2c2 1 2 5 0 6" stroke="#444" strokeWidth=".8" /></Ic>],
  ["校验", <Ic className="size-[12px]"><path d="M.5.500h9v8h-9z" fill="#fff" stroke="#aaa" strokeWidth=".6" /><path d="M1.500 2.500h7M1.500 4h5" stroke="#999" strokeWidth=".8" /><path d="M3.500 6l2 2.500L9.500 4" stroke="#333" strokeWidth="1.600" /></Ic>],
];

function RelationsDialog() {
  return (
    <section role="dialog" aria-label="关系" className="absolute -right-[16px] left-[433px] top-[51px] flex flex-col border-2 border-[#c2c7cb] bg-[#eceef0] text-[8px]">
      <header className="relative flex h-[13px] items-center justify-center border-b border-[#cfd2d5] bg-[#f9f9fa] text-[#888]">
        <h2>关系</h2>
        <div className="absolute right-[2px] flex gap-[7px]">
          <Ic className="h-[6px] w-[6px]"><path d="M1 6h8" stroke="#888" strokeWidth="2" /></Ic>
          <Ic className="h-[6px] w-[6px]"><path d="M1 1h8v8H1z" stroke="#888" strokeWidth="1.500" /></Ic>
          <Ic className="h-[6px] w-[6px]"><path d="M1 1l8 8M9 1L1 9" stroke="#888" strokeWidth="1.500" /></Ic>
        </div>
      </header>
      <nav className="flex h-[19px] items-center gap-[10px] border-b border-[#d4d7d9] pl-[5px] text-[#b1b3b5]">
        {["文件", "编辑", "插入", "参数", "实用工具", "显示"].map((m) => <button key={m} className="whitespace-nowrap">{m}</button>)}
      </nav>
      <fieldset className="mx-[6px] mt-[6px] flex h-[37px] flex-col border border-[#d0d3d5] px-[6px]">
        <legend className="ml-[1px] px-[4px] font-bold leading-[12px] text-[#444]">查找范围</legend>
        <div className="flex items-center gap-[4px] pt-[1px] text-[7px] text-[#8d8d8d]">
          <Picker value="截面" label="对象类型" className="w-[127px]" />
          <button aria-label="选择" className="flex h-[16px] w-[16px] items-center justify-center border border-[#d3d6d8]">
            <Ic><path d="M3 1v7l1.700-1.500L6 9.300l1-.5-1.200-2.600H8z" fill="#fff" stroke="#888" strokeWidth=".8" /></Ic>
          </button>
          <Picker value="S2D0001" label="对象" className="grow font-['Liberation_Mono','Noto_Sans_CJK_SC',monospace]" />
        </div>
      </fieldset>
      <h3 className="mt-[6px] flex h-[12px] items-center gap-[4px] pl-[8px] text-[#555]">
        <Ic className="h-[4px] w-[6px]" box="0 0 6 4"><path d="M0 0h6L3 4z" fill="#444" /></Ic>关系
      </h3>
      <div className="flex h-[16px] w-[299px] items-center justify-between pl-[5px]">
        {editTools.map(([n, i]) => (
          <button key={n} aria-label={n} className={"flex items-center justify-center " + (n === "函数" ? "w-[26px]" : "w-[18px]")}>{i}</button>
        ))}
      </div>
      <div className="flex h-[134px]">
        <div className="flex w-[19px] flex-col items-center pl-[6px] font-['Liberation_Mono',monospace] text-[7px] leading-[13px] text-[#444]">
          {["+", "-", "*", "/", "^", "()", "[]", "="].map((o) => <button key={o}>{o}</button>)}
        </div>
        <div className="flex grow flex-col border border-[#b9bcbf] bg-white pl-[2px] pt-[3px]">
          <textarea
            aria-label="关系式"
            rows={1}
            spellCheck={false}
            className="block h-[9px] w-full resize-none overflow-hidden whitespace-pre font-['Liberation_Mono',monospace] text-[6px] leading-[9px] text-[#555]"
            defaultValue={'sd3=abs(evalgraph("ANALYSIS1",trajpar)/10000-evalgraph("ANALYSIS2",trajpar)/10000)'}
          />
          <p className="flex h-[11px] items-center text-[7px] text-[#333]">
            <Ic className="size-[6px]"><path d="M0 3.500h5V1l5 4-5 4V6.500H0z" fill="#f3ee17" stroke="#b0aa00" strokeWidth=".8" /></Ic>
            在函数计算中可能存在错误。
          </p>
        </div>
      </div>
      <h3 className="ml-[6px] mt-[3px] flex h-[16px] items-center gap-[4px] border-t-2 border-[#d3d6d8] pl-[4px] text-[7px] text-[#555]">
        <Ic className="h-[7px] w-[4px]" box="0 0 4 7"><path d="M0 0l4 3.500L0 7z" fill="#444" /></Ic>局部参数
      </h3>
      <div className="mt-[7px] flex gap-[5px] border-t border-[#d5d8da] px-[5px] py-[7px] font-bold text-[#333]">
        <button className="mr-auto h-[13px] w-[45px] rounded-[2px] border border-[#bfc2c4] bg-[#f4f4f5] leading-[11px]">重置</button>
        <button className="h-[13px] w-[45px] rounded-[2px] border border-[#8bccee] bg-linear-to-b from-[#a9e0fc] to-[#7ccbf8] leading-[11px]">确定</button>
        <button className="h-[13px] w-[45px] rounded-[2px] border border-[#bfc2c4] bg-[#f4f4f5] leading-[11px]">取消</button>
      </div>
    </section>
  );
}

function Watermark() {
  return (
    <div className="pointer-events-none absolute bottom-[6px] right-[6px] flex items-center gap-[6px]">
      <Ic className="h-[48px] w-[42px]" box="0 0 42 48">
        <path d="M21 1l20 11.500v23L21 47 1 35.500v-23z" fill="#6aaede" />
        <path d="M21 1l20 11.500-9 5.500L12 8z" fill="#6496cf" />
        <path d="M1 12.500L12 7c5 1 12 2 18 8l-17 3L1 29z" fill="#5588c6" />
        <path d="M41 12.500v23L31 33c0-6 1-10-2-17z" fill="#79b7e4" />
        <path d="M1 30c4-6 7-9 11-11v14c4 4 8 6 14 6l-5 8L1 35.500z" fill="#67c0e2" />
        <path d="M41 35.500L21 47c4-5 7-8 9-13z" fill="#8ad4ed" />
        <path d="M12 8c9 1 15 3 18 9M41 13c-5 3-9 4-11 4M1 29c3-6 7-9 11-11M12 33c5 4 10 6 18 4M31 34c1-6 1-11-1-17" stroke="#dceff9" />
        <path d="M21 12.500l10 6v11.500l-10 6-10-6V18.500z" fill="#fff" />
        <path d="M21 16l7 4-7 4-7-4z" fill="#82b0e0" />
        <path d="M14 21l6.500 3.700v7.500L14 28.500z" fill="#4d83c3" />
        <path d="M28 21l-6.500 3.700v7.500L28 28.500z" fill="#7cc8e8" />
      </Ic>
      <div className="flex flex-col pb-[4px] text-[#66b2dc] [paint-order:stroke] [-webkit-text-stroke:2px_#ffffffcc]">
        <strong className="whitespace-nowrap text-[23px] font-medium leading-[26px]">3D世界网</strong>
        <span className="whitespace-nowrap font-['DejaVu_Sans',sans-serif] text-[10px] leading-[10px]">WWW.3DSJW.COM</span>
      </div>
    </div>
  );
}

function Behind() {
  return (
    <div className="flex w-[17px] shrink-0 flex-col bg-[#eceded]">
      <div className="flex h-[16px] items-start justify-center bg-linear-to-b from-[#b9d2ea] to-[#7faedb] pt-[2px]"><Ic className="size-[7px]"><path d="M1 1l8 8M9 1L1 9" stroke="#fff" strokeWidth="2" /></Ic></div>
      <div className="flex h-[24px] items-center justify-end border-b border-[#ccc] bg-[#fafafa]"><Ic className="h-[8px] w-[6px]" box="0 0 6 8"><path d="M0 1h1.500M3 1h3M0 4h1.500M3 4h3M0 7h1.500M3 7h3" stroke="#333" strokeWidth="1.500" /></Ic></div>
      <div className="grow" />
      <div className="mr-[2px] h-[60px] bg-black" />
      <div className="flex h-[12px] items-center justify-between text-[8px] text-[#333]"><span>s</span><span>+</span></div>
    </div>
  );
}

export default function App() {
  return (
    <div className="relative flex h-screen overflow-hidden bg-white font-['Noto_Sans','Noto_Sans_CJK_SC',sans-serif]">
      <div className="flex min-w-0 grow flex-col border-r-2 border-t-2 border-[#737678] bg-[#fbfbfb]">
        <TitleBar />
        <TabBar />
        <Ribbon />
        <div className="flex min-h-0 grow">
          <ModelTree />
          <Canvas />
        </div>
        <StatusBar />
      </div>
      <Behind />
      <RelationsDialog />
      <Watermark />
    </div>
  );
}
